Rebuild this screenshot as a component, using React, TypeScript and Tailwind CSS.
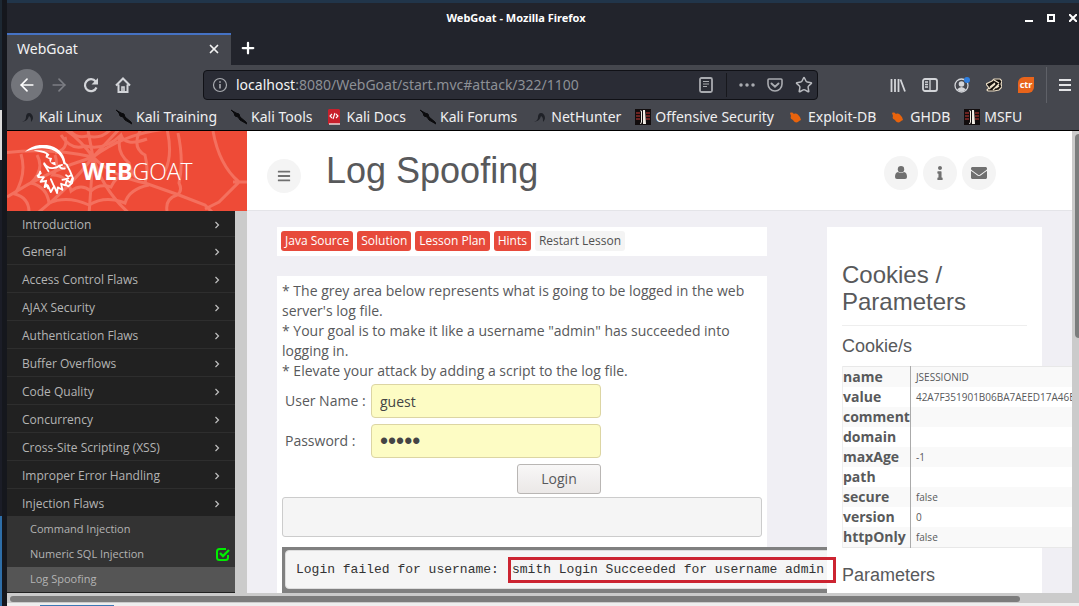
import type { ReactNode } from 'react';
import { ArrowLeft, ArrowRight, Plus, Star, X } from 'lucide-react';
import { FaBars, FaEnvelope, FaInfo } from 'react-icons/fa';

const bookmarks = [
  { label: 'Kali Linux', icon: 'dragon' },
  { label: 'Kali Training', icon: 'slash' },
  { label: 'Kali Tools', icon: 'slash' },
  { label: 'Kali Docs', icon: 'docs' },
  { label: 'Kali Forums', icon: 'slash' },
  { label: 'NetHunter', icon: 'dragon' },
  { label: 'Offensive Security', icon: 'offsec' },
  { label: 'Exploit-DB', icon: 'bug' },
  { label: 'GHDB', icon: 'bug' },
  { label: 'MSFU', icon: 'offsec' },
];

const categories = [
  'Introduction',
  'General',
  'Access Control Flaws',
  'AJAX Security',
  'Authentication Flaws',
  'Buffer Overflows',
  'Code Quality',
  'Concurrency',
  'Cross-Site Scripting (XSS)',
  'Improper Error Handling',
  'Injection Flaws',
];

const lessons = [
  { label: 'Command Injection', solved: false, active: false },
  { label: 'Numeric SQL Injection', solved: true, active: false },
  { label: 'Log Spoofing', solved: false, active: true },
];

const cookie = [
  ['name', 'JSESSIONID'],
  ['value', '42A7F351901B06BA7AEED17A46E'],
  ['comment', ''],
  ['domain', ''],
  ['maxAge', '-1'],
  ['path', ''],
  ['secure', 'false'],
  ['version', '0'],
  ['httpOnly', 'false'],
];

function BookmarkIcon({ name }: { name: string }) {
  return (
    <svg viewBox="0 0 16 16" className="size-4 shrink-0" aria-hidden="true">
      {name === 'dragon' && (
        <path d="M3 13c3-1 4-3 4-5s1-4 3-4 4 2 4 5c0 1-1 3-2 4 0-3 0-5-2-6-1 3-2 5-7 6z" fill="#1f2127" />
      )}
      {name === 'slash' && (
        <path d="M0 1l5 3 3 1 1 3 6 5 1 2-7-4-2-3-3-1-1-3z" fill="#0b0b0d" stroke="#0b0b0d" />
      )}
      {name === 'docs' && (
        <g>
          <path d="M3 0h10l1 1v14H2V1z" fill="#c8202c" />
          <path d="M3 15h11" stroke="#f1d5d6" strokeWidth="1.5" />
          <path d="M6 5L4 7l2 2M10 5l2 2-2 2M9 4L7 10" stroke="#fff" fill="none" strokeWidth="1.1" />
        </g>
      )}
      {name === 'offsec' && (
        <g>
          <path d="M0 0h16v16H0z" fill="#120d0e" />
          <path d="M1 4h4M11 4h4M1 7h4M11 7h4M1 10h4M11 10h4" stroke="#8c2b29" strokeWidth="1.5" />
          <path d="M5 1l1 2v10l-1 2h1l1-2V2zM8 1h2l1 14H8z" fill="#f1ece4" />
        </g>
      )}
      {name === 'bug' && (
        <path d="M2 4c2-1 3 0 4 1 2-1 4 0 5 2l1 1 1 3-2 1-1 1c-2 1-4 0-5-2-2-1-3-2-2-4z" fill="#e8630c" />
      )}
    </svg>
  );
}

function GoatLogo() {
  return (
    <svg viewBox="40 31 160 160" className="size-[53px] shrink-0" aria-hidden="true">
      <path d="M46 51C62 35 88 28 112 31c32 4 53 25 56 52l8 10-14-5c-3-22-19-40-44-45-24-5-44-1-72 8z" fill="#fff" />
      <path
        d="M72 48c20-3 38 1 48 12l-6 8 14 2-5 14 14-2 2 10c-12-2-21-9-19-18l-12-6 2-10c-10-5-22-7-38-10z"
        fill="#fff"
      />
      <g fill="none" stroke="#fff" strokeWidth="5.5" strokeLinejoin="round" strokeLinecap="round">
        <path d="M104 86c7 12 18 17 30 14 9 0 15-7 24-9M172 90l10 20 9 22-3 14-11 10-8-5" />
        <path d="M149 93c3 7 10 10 17 9M104 89l13 21M186 122l-10 5-6-5" />
        <path d="M92 111l-6 17 17 0-10 14 17-3-5 19 10-5 9 20 10-18 9 21 2-17 14 7-4-18 12 5 6-16 10 8 5-12" />
        <path d="M124 134l8 18M159 136l18-4M84 124l10-8M111 150l5 12" />
      </g>
    </svg>
  );
}

// Threads radiate from a hub; the rings sag between them.
function SpiderWeb() {
  return (
    <svg
      viewBox="0 0 240 80"
      preserveAspectRatio="xMidYMid slice"
      className="absolute inset-0 size-full"
      aria-hidden="true"
    >
      <g fill="none" stroke="#f4705e" strokeWidth="3">
        <path d="M86 26Q70 4 48-8M86 26L80-6M86 26L118-8M86 26Q118 2 160-2M86 26Q40 16-4 22M86 26Q40 40 0 66M86 26Q60 60 28 84M86 26l-4 58M86 26q10 34 38 58M86 26q20 20 52 26l34 12 26 10 8 8" />
        <path d="M62-2q6 10 18 7 14 4 24-7M54 4q10 16 24 11 20 5 36-11 4 12 26 4M48 22q14-4 10-16M114 4q-6 16 8 28 2 10 8 16" />
        <path d="M134-2q-10 18 4 26 4 16 0 28M48 24q4 12-2 20 14 0 18 16 10-8 20 0 8-8 20-4 4-10 16-14" />
        <path d="M30 24q8 14-6 28 16 4 18 20 18-8 40 2 16-10 36-2 4-14 24-18M14 23q6 20-6 40 14 4 14 18" />
        <path d="M171 2q6 28 1 50 4 8-2 12-12 4-10 16M206 0q6 34 26 51-8 8-20 20l-14 7M226 51h16M160-2q6 26-2 42" />
      </g>
    </svg>
  );
}

function ToolIcon({ label, children }: { label: string; children: ReactNode }) {
  return (
    <button type="button" aria-label={label} className="flex size-8 shrink-0 items-center justify-center">
      <svg viewBox="0 0 16 16" className="size-4" fill="none" stroke="#d3d5d9" strokeWidth="1.6">
        {children}
      </svg>
    </button>
  );
}

function TitleBar() {
  return (
    <header className="flex h-[30px] shrink-0 items-center bg-[#22242c] pr-0.5">
      <h2 className="flex-1 text-center text-[11px] font-bold text-white">WebGoat - Mozilla Firefox</h2>
      <div className="flex gap-3.5 text-white">
        <button type="button" aria-label="Minimize" className="flex h-2 w-2 items-end">
          <span className="h-0.5 w-full bg-white" />
        </button>
        <button type="button" aria-label="Maximize" className="size-2 border-2 border-white" />
        <button type="button" aria-label="Close">
          <svg viewBox="0 0 8 8" className="size-2" stroke="#fff" strokeWidth="2" aria-hidden="true">
            <path d="M0 0l8 8M8 0L0 8" />
          </svg>
        </button>
      </div>
    </header>
  );
}

function TabStrip() {
  return (
    <div className="flex h-8 shrink-0 bg-[#22242c]">
      <div className="flex w-56 items-center border-t-2 border-[#4572c4] bg-[#45474e] px-2.5 pb-0.5 text-sm text-[#f2f2f3]">
        <span className="flex-1">WebGoat</span>
        <button type="button" aria-label="Close tab">
          <X className="size-3.5" strokeWidth={3} />
        </button>
      </div>
      <button type="button" aria-label="New tab" className="px-2 pb-0.5 text-white">
        <Plus className="size-[18px]" strokeWidth={3} />
      </button>
    </div>
  );
}

function Toolbar() {
  return (
    <div className="flex h-10 shrink-0 items-center bg-[#45474e] pl-1 text-[#d8dadd]">
      <button
        type="button"
        aria-label="Back"
        className="flex size-8 items-center justify-center rounded-full bg-[#73757b] text-white"
      >
        <ArrowLeft className="size-5" />
      </button>
      <button type="button" aria-label="Forward" className="flex size-8 items-center justify-center text-[#7c7e84]">
        <ArrowRight className="size-5" />
      </button>
      <ToolIcon label="Reload">
        <path d="M13.5 10.5A6 6 0 1 1 12.7 4.5" strokeWidth="2.2" />
        <path d="M15 1v6.5H8.5z" fill="#d3d5d9" stroke="none" />
      </ToolIcon>
      <ToolIcon label="Home">
        <path d="M1 8.5L8 1.5l7 7M3.5 7.5V15h9V7.5" strokeWidth="2" />
        <path d="M7 15v-5h2v5" />
      </ToolIcon>
      <div className="ml-16 flex h-[30px] flex-1 items-center rounded-sm border border-[#101116] bg-[#2a2c35] pl-2">
        <svg viewBox="0 0 16 16" className="mr-2 size-4 shrink-0" fill="none" stroke="#a9abb0" aria-hidden="true">
          <circle cx="8" cy="8" r="6.5" strokeWidth="1.2" />
          <path d="M8 7v4.5M8 4.2v1.5" strokeWidth="1.6" />
        </svg>
        <div className="flex-1 text-sm text-[#8d9096]">
          <span className="text-[#f4f4f5]">localhost</span>:8080/WebGoat/start.mvc#attack/322/1100
        </div>
        <ToolIcon label="Reader view">
          <rect x="2" y="1" width="12" height="14" rx="1.5" strokeWidth="1.8" stroke="#a9abb0" />
          <path d="M5 4.5h6M5 7h6M5 9.5h4" strokeWidth="1.2" stroke="#a9abb0" />
        </ToolIcon>
        <div className="mx-1 h-6 border-l border-[#17181d]" />
        <ToolIcon label="Page actions">
          <path d="M2 8h.01M8 8h.01M14 8h.01" strokeLinecap="round" strokeWidth="3.5" stroke="#a9abb0" />
        </ToolIcon>
        <div className="-ml-1 flex items-center">
          <ToolIcon label="Save to Pocket">
            <path d="M2 2h12q1 0 1 1v4a7 7 0 0 1-14 0V3q0-1 1-1z" stroke="#a9abb0" />
            <path d="M4.5 6.5L8 9.8l3.5-3.3" strokeLinecap="round" strokeWidth="1.9" stroke="#a9abb0" />
          </ToolIcon>
          <button type="button" aria-label="Bookmark this page" className="mr-1 ml-1 text-[#b8babf]">
            <Star className="size-[18px]" />
          </button>
        </div>
      </div>
      <div className="ml-16 flex items-center">
        <ToolIcon label="Library">
          <path d="M1.5 2v13M5 2v13M8.5 2v13M10.5 2.5L15 14.5" strokeWidth="1.8" />
        </ToolIcon>
        <ToolIcon label="Sidebars">
          <rect x="1" y="2" width="14" height="12" rx="2" strokeWidth="1.8" />
          <path d="M8 2v12M3 5h3M3 7.5h3M3 10h3" strokeWidth="1.3" />
        </ToolIcon>
        <ToolIcon label="Account">
          <circle cx="7.5" cy="8.5" r="6.5" strokeWidth="1.3" />
          <circle cx="7.5" cy="7" r="2.8" fill="#d3d5d9" stroke="none" />
          <path d="M3 12.5q4.5-5 9 0-4.5 4-9 0z" fill="#d3d5d9" stroke="none" />
          <circle cx="13" cy="3" r="3" fill="#2f7fe0" stroke="none" />
        </ToolIcon>
        <ToolIcon label="Tamper data">
          <path d="M0 7l6-3 2-2 6 0 2 2-1 3 1 3-3 3-5 1H2l-1-1 2-2z" fill="#17130f" stroke="#e9dcc4" strokeWidth="1.2" />
          <path d="M3 12l6-5M7 13l6-6M8 3l5 3M4 10l5-4M10 11l3-2" stroke="#f0e4cc" strokeWidth="1.3" />
        </ToolIcon>
        <button
          type="button"
          className="mx-2 flex h-4 w-4 items-center justify-center rounded-tl-md rounded-br-md bg-[#e8641b] text-[9px] font-bold text-white"
        >
          ctr
        </button>
        <div className="ml-1 h-9 border-l border-[#5f6168]" />
        <button type="button" aria-label="Open menu" className="flex w-8 flex-col items-center gap-[3px] pl-1">
          <span className="h-0.5 w-3 bg-[#e3e4e6]" />
          <span className="h-0.5 w-3 bg-[#e3e4e6]" />
          <span className="h-0.5 w-3 bg-[#e3e4e6]" />
        </button>
      </div>
    </div>
  );
}

function Bookmarks() {
  return (
    <nav className="flex h-[26px] shrink-0 items-center gap-3.5 border-b border-black bg-[#45474e] pb-0.5 pl-3 text-sm text-[#f0f0f1]">
      {bookmarks.map((b) => (
        <a key={b.label} href="#" className="flex items-center gap-1 whitespace-nowrap">
          <BookmarkIcon name={b.icon} />
          {b.label}
        </a>
      ))}
    </nav>
  );
}

function Sidebar() {
  return (
    <aside className="flex w-60 shrink-0 flex-col">
      <div className="relative flex h-20 shrink-0 items-center overflow-hidden bg-[#ee4b37] pl-4">
        <SpiderWeb />
        <a href="#" className="relative flex items-center gap-1.5 text-[23px] text-white">
          <GoatLogo />
          <span>
            <b>WEB</b>
            <span className="font-light">GOAT</span>
          </span>
        </a>
      </div>
      <div className="flex min-h-0 flex-1 overflow-hidden bg-[#cbcbcb] pr-3">
        <nav className="flex-1 bg-[#212121] text-xs text-[#b4b4b4]">
          <ul>
            {categories.map((c) => (
              <li key={c} className="border-b border-[#2e2e2e] last:border-0 first:*:h-[25px]">
                <a href="#" className="flex h-[27px] items-center justify-between pt-0.5 pr-3.5 pl-[15px]">
                  {c}
                  <svg viewBox="0 0 8 8" className="size-2" fill="none" stroke="#c0c0c0" aria-hidden="true">
                    <path d="M2.5 1l3 3-3 3" strokeWidth="1.2" />
                  </svg>
                </a>
              </li>
            ))}
          </ul>
          <ul className="bg-[#333] pt-px text-[11px]">
            {lessons.map((l) => (
              <li key={l.label} className={l.active ? 'bg-[#555]' : ''}>
                <a href="#" className="flex h-[25px] items-center justify-between pr-1 pl-[23px]">
                  {l.label}
                  {l.solved && (
                    <svg viewBox="0 0 16 16" className="size-4" fill="none" stroke="#00ee00" aria-label="Solved">
                      <path d="M11 2H4.5Q2 2 2 4.5v6Q2 13 4.5 13h6q2.500 0 2.500-2.500V8" strokeWidth="2" />
                      <path d="M5 6l3 3 6-6" strokeWidth="2.4" />
                    </svg>
                  )}
                </a>
              </li>
            ))}
          </ul>
        </nav>
      </div>
    </aside>
  );
}

function RoundButton({ label, children }: { label: string; children: ReactNode }) {
  return (
    <button
      type="button"
      aria-label={label}
      className="flex size-[34px] shrink-0 items-center justify-center rounded-full bg-[#f4f4f4] text-sm text-[#707070]"
    >
      {children}
    </button>
  );
}

function PageHeader() {
  return (
    <div className="flex h-20 shrink-0 items-center border-b border-[#e4e4e8] bg-white pr-[76px] pl-5">
      <div className="pt-2.5">
        <RoundButton label="Toggle menu">
          <FaBars />
        </RoundButton>
      </div>
      <h1 className="ml-[25px] flex-1 font-['Liberation_Sans',sans-serif] text-4xl text-[#58595b]">Log Spoofing</h1>
      <div className="flex gap-[5px] pt-1">
        <RoundButton label="User">
          <svg viewBox="0 0 12 13" className="h-[13px] w-3" fill="currentColor" aria-hidden="true">
            <circle cx="6" cy="3.2" r="3.2" />
            <path d="M3 6q3 2 6 0 3 .5 3 5 0 2-2 2H2q-2 0-2-2 0-4.500 3-5z" />
          </svg>
        </RoundButton>
        <RoundButton label="About">
          <FaInfo />
        </RoundButton>
        <RoundButton label="Contact">
          <FaEnvelope className="size-4" />
        </RoundButton>
      </div>
    </div>
  );
}

function LessonActions() {
  const red = ['Java Source', 'Solution', 'Lesson Plan', 'Hints'];
  return (
    <div className="flex gap-1 bg-white px-1 pt-1 pb-[5px] text-xs">
      {red.map((label) => (
        <button key={label} type="button" className="h-5 rounded-[3px] bg-[#e74a3b] px-1 whitespace-nowrap text-white">
          {label}
        </button>
      ))}
      <button type="button" className="h-5 rounded-[3px] bg-[#f4f4f4] px-1 whitespace-nowrap text-[#505050]">
        Restart Lesson
      </button>
    </div>
  );
}

function Lesson() {
  return (
    <div className="mt-5 flex-1 bg-white px-[5px] pt-[5px]">
      <p>
        * The grey area below represents what is going to be logged in the web server&apos;s log file.
        <br />* Your goal is to make it like a username &quot;admin&quot; has succeeded into logging in.
        <br />* Elevate your attack by adding a script to the log file.
      </p>
      <form className="mt-[3px] grid w-[319px] grid-cols-[86px_1fr] items-center gap-y-1.5 pl-[3px]">
        <label htmlFor="username">User Name :</label>
        <input
          id="username"
          defaultValue="guest"
          className="h-[34px] w-full rounded border border-[#dcd5a3] bg-[#fdfcc4] px-2 text-[#444]"
        />
        <label htmlFor="password">Password :</label>
        <input
          id="password"
          type="password"
          defaultValue="guest"
          className="h-[34px] w-full rounded border border-[#dcd5a3] bg-[#fdfcc4] px-2 font-['Liberation_Sans',sans-serif] text-[23px] text-[#444]"
        />
        <button
          type="button"
          className="col-start-2 h-[30px] w-[84px] justify-self-end rounded-[3px] border border-[#b9b6b4] bg-linear-to-b from-[#f8f7f7] to-[#ebe8e7]"
        >
          Login
        </button>
      </form>
      <div className="mt-[3px] h-10 rounded-[3px] border border-[#ccc] bg-[#f5f5f5]" />
      <div className="mt-2.5 w-max border-[3px] border-b-[5px] border-[#808080] bg-[#808080]">
        <pre className="flex h-[39px] w-[600px] items-center rounded border border-[#ddd] bg-[#f5f5f5] pl-2.5 font-['Liberation_Mono',monospace] text-[13px] text-[#333]">
          <span className="w-[216px]">Login failed for username:</span>
          <span className="relative">
            smith Login Succeeded for username admin
            <span className="absolute -inset-y-[3px] -left-1 z-20 w-[328px] border-[3px] border-[#cc2431]" />
          </span>
        </pre>
      </div>
    </div>
  );
}

function CookiePanel() {
  return (
    <div className="relative z-10 w-[215px] shrink-0 bg-white px-[15px] pt-[34px]">
      <h3 className="border-b border-[#eee] pb-2.5 font-['Liberation_Sans',sans-serif] text-2xl leading-[27px]">
        Cookies / Parameters
      </h3>
      <h4 className="mt-2.5 font-['Liberation_Sans',sans-serif] text-lg leading-5">Cookie/s</h4>
      <table className="mt-2.5 border-y border-[#e8e8e8]">
        <tbody>
          {cookie.map(([key, value]) => (
            <tr key={key} className="h-5 odd:bg-[#f9f9f9] even:bg-white">
              <th className="border-r border-l border-l-[#eee] border-r-[#aaa] text-left text-sm leading-5">{key}</th>
              <td className="min-w-48 pl-[5px] text-[10px] leading-5">{value}</td>
            </tr>
          ))}
        </tbody>
      </table>
      <h4 className="mt-[17px] font-['Liberation_Sans',sans-serif] text-lg leading-5">Parameters</h4>
    </div>
  );
}

export default function App() {
  return (
    <div className="flex h-screen overflow-hidden bg-[#17191f] font-['Noto_Sans',sans-serif]">
      <div className="flex w-[7px] shrink-0 flex-col border-r-[5px] border-[#15171d]">
        <div className="h-[110px] bg-[#1d2833]" />
        <div className="h-[50px] bg-[#dcdcdc]" />
        <div className="flex-1 bg-[#1b1d27]" />
        <div className="h-[90px] bg-[#2e6ea8]" />
      </div>
      <div className="flex min-w-0 flex-1 flex-col">
        <div className="h-[3px] shrink-0 bg-[#21354a]" />
        <TitleBar />
        <TabStrip />
        <Toolbar />
        <Bookmarks />
        <div className="flex min-h-0 flex-1 font-['Open_Sans',sans-serif]">
          <Sidebar />
          <main className="flex min-w-0 flex-1 flex-col overflow-hidden bg-[#f0eff4] text-[#58595b]">
            <PageHeader />
            <div className="flex min-h-0 flex-1 px-[30px] pt-4 text-sm leading-5">
              <div className="mr-[60px] flex min-w-0 flex-1 flex-col">
                <LessonActions />
                <Lesson />
              </div>
              <CookiePanel />
            </div>
          </main>
          <div className="w-[7px] shrink-0 bg-[#cbcbcb] pt-[3px] pl-[3px]">
            <div className="h-[204px] rounded-l bg-[#7b7d7d]" />
          </div>
        </div>
        <div className="h-2.5 shrink-0 bg-[#cbcbcb] pt-[3px] pr-[59px] pl-[3px]">
          <div className="h-1.5 rounded-full bg-[#7c7c7c]" />
        </div>
        <div className="flex h-[3px] shrink-0 items-end bg-[#eee] pl-[33px]">
          <div className="h-px w-[74px] bg-[#3b78b5]" />
        </div>
      </div>
    </div>
  );
}
